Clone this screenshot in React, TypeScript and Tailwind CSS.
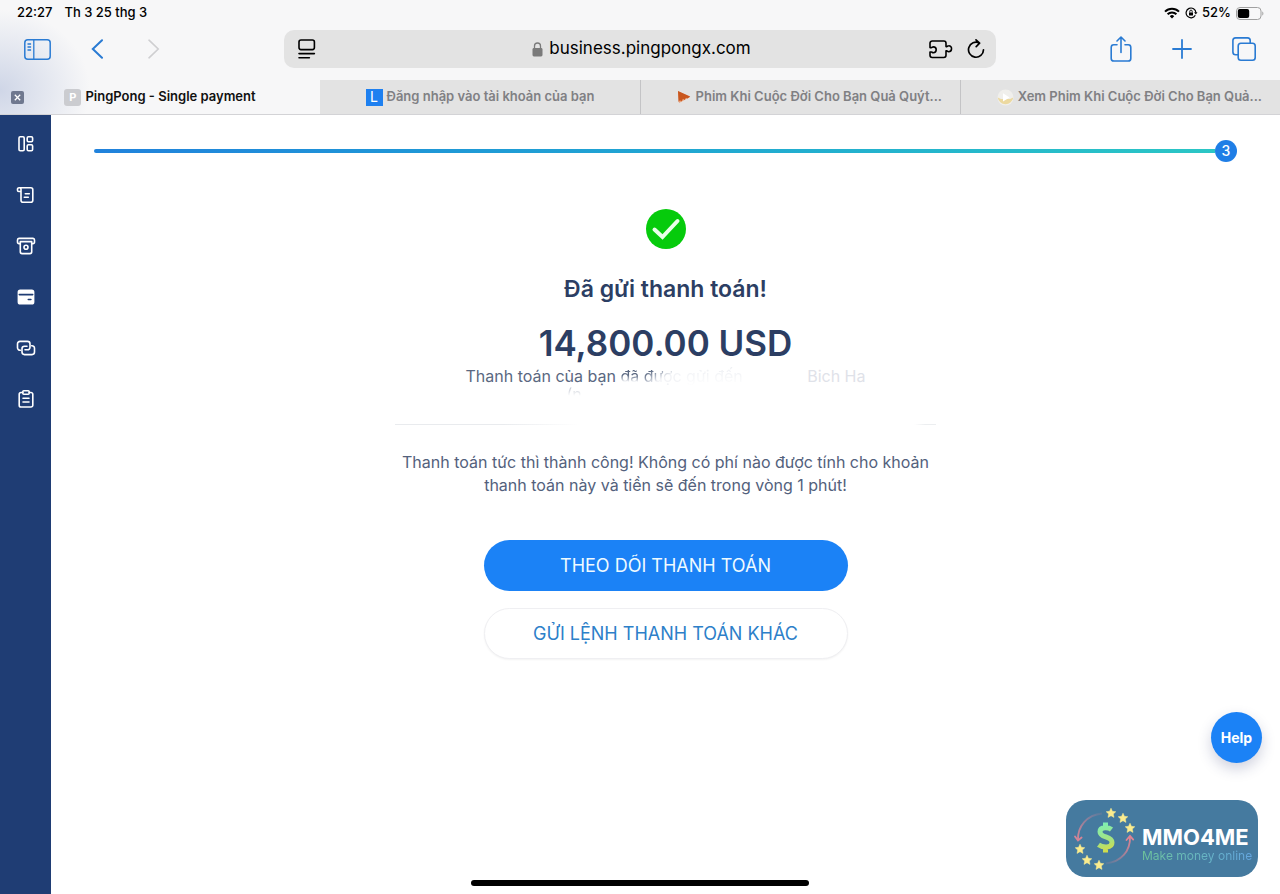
import type { ReactNode } from "react";

const STATUS_DATE = "Th 3 25 thg 3";
const INSTANT_MESSAGE =
  "Thanh toán tức thì thành công! Không có phí nào được tính cho khoản thanh toán này và tiền sẽ đến trong vòng 1 phút!";

function StatusBar() {
  return (
    <div className="flex h-[26px] items-center justify-between pr-4 pl-[17px] text-[13px] font-medium text-black">
      <div className="flex gap-3">
        <span>22:27</span>
        <span>{STATUS_DATE}</span>
      </div>
      <div className="flex items-center gap-1">
        <svg width="16" height="12" viewBox="0 0 16 12" fill="none" stroke="currentColor" strokeWidth="2">
          <path d="M1 4.6a10 10 0 0 1 14 0M3.6 7.3a6.2 6.2 0 0 1 8.8 0" />
          <path d="M5.8 9.2a3.1 3.1 0 0 1 4.4 0L8 11.5z" fill="currentColor" stroke="none" />
        </svg>
        <svg width="14" height="12" viewBox="0 0 14 12" fill="none" stroke="currentColor" strokeWidth="1.2">
          <path d="M11.3 8.3A4.9 4.9 0 1 1 11.9 5.6" />
          <path d="M10.1 5.2h3.4l-1.7 2.2z" fill="currentColor" stroke="none" />
          <rect x="5" y="5.4" width="4" height="3" rx=".5" fill="currentColor" stroke="none" />
          <path d="M5.8 5.6V4.3a1.2 1.2 0 0 1 2.4 0v1.3" strokeWidth=".9" />
        </svg>
        <span>52%</span>
        <svg width="29" height="13" viewBox="0 0 29 13" fill="none">
          <rect x="1.5" y=".5" width="24.5" height="12" rx="3.5" stroke="#a0a0a0" />
          <rect x="2.8" y="1.9" width="11.4" height="9.2" rx="2" fill="#000" />
          <path d="M27.3 4.5c1.4.4 1.4 3.6 0 4z" fill="#a0a0a0" />
        </svg>
      </div>
    </div>
  );
}

function Toolbar() {
  return (
    <div className="grid grid-cols-[2fr_5fr_2fr] items-center pt-1 pb-3 text-[#2a7bd3]">
      <div className="flex items-center gap-10 pl-6">
        <button type="button" aria-label="Sidebar">
          <svg width="27" height="21" viewBox="0 0 27 21" fill="none" stroke="currentColor" strokeWidth="1.5" className="block">
            <rect x=".8" y=".8" width="25.4" height="19.4" rx="3" />
            <path d="M9.8 1v19M3.5 5h3.6M3.5 8h3.6M3.5 11h3.6" strokeWidth="1.3" />
          </svg>
        </button>
        <button type="button" aria-label="Back">
          <svg width="16" height="20" viewBox="0 0 16 20" fill="none" stroke="currentColor" strokeWidth="2" strokeLinecap="round" className="block">
            <path d="M11 1.2 1.8 10l9.2 8.8" />
          </svg>
        </button>
        <button type="button" aria-label="Forward" className="text-[#cfcfd1]">
          <svg width="16" height="20" viewBox="0 0 16 20" fill="none" stroke="currentColor" strokeWidth="1.6" strokeLinecap="round" className="block">
            <path d="m2 1.2 9.2 8.8L2 18.8" />
          </svg>
        </button>
      </div>
      <div className="flex h-[38px] items-center justify-between rounded-[10px] bg-[#e3e3e3] pr-[11px] pl-[14px] text-black">
        <button type="button" aria-label="Page menu" className="w-14">
          <svg width="18" height="20" viewBox="0 0 18 20" fill="none" stroke="currentColor" strokeWidth="1.6" strokeLinecap="round" className="block">
            <rect x="1" y="1" width="15.4" height="9.6" rx="2" />
            <path d="M1 14.6h15.4M1 18.8h10.4" />
          </svg>
        </button>
        <label className="flex items-center gap-[6px]">
          <svg width="11" height="15" viewBox="0 0 11 15" fill="#7a7a7a">
            <rect x=".5" y="6" width="10" height="8.5" rx="1.4" />
            <path d="M2.5 6.5V4a3 3 0 0 1 6 0v2.5" fill="none" stroke="#7a7a7a" strokeWidth="1.3" />
          </svg>
          <input
            type="text"
            aria-label="Address"
            defaultValue="business.pingpongx.com"
            className="field-sizing-content bg-transparent text-[17px] outline-none"
          />
        </label>
        <div className="flex items-center gap-[14px]">
          <button type="button" aria-label="Extensions">
            <svg width="24" height="19" viewBox="0 0 24 19" fill="none" stroke="currentColor" strokeWidth="1.6" strokeLinejoin="round" className="block">
              <path d="M1 6V3.2A2.2 2.2 0 0 1 3.2 1h11.6A2.2 2.2 0 0 1 17 3.200V6.600h.8c.5 0 .6-.8 1.900-.8a2.800 2.800 0 0 1 2.800 3.400 2.800 2.800 0 0 1-2.800 2.500c-1.300 0-1.400-.8-1.900-.8H17v4.400a2.200 2.200 0 0 1-2.200 2.200H3.200A2.200 2.200 0 0 1 1 15.300V12h1.400c.6 0 .8.700 1.900.7a2.900 2.900 0 0 0 0-5.800c-1.100 0-1.300.7-1.900.7H1z" />
            </svg>
          </button>
          <button type="button" aria-label="Reload">
            <svg width="18" height="20" viewBox="0 0 18 20" fill="none" stroke="currentColor" strokeWidth="1.7" strokeLinecap="round" strokeLinejoin="round" className="block">
              <path d="M12.3 4A7.500 7.500 0 1 0 16.500 10.800M9 .9l3.600 3.300L9.200 7.600" />
            </svg>
          </button>
        </div>
      </div>
      <div className="flex items-center justify-end gap-10 pr-6">
        <button type="button" aria-label="Share">
          <svg width="22" height="26" viewBox="0 0 22 26" fill="none" stroke="currentColor" strokeWidth="1.6" strokeLinecap="round" strokeLinejoin="round" className="block">
            <path d="M7 8.800H3.800A2.600 2.600 0 0 0 1.200 11.400v11a2.600 2.600 0 0 0 2.600 2.600h14.400a2.600 2.600 0 0 0 2.600-2.600v-11a2.600 2.600 0 0 0-2.600-2.600H15M11 16.500V1.200M7 5l4-4 4 4" />
          </svg>
        </button>
        <button type="button" aria-label="New tab">
          <svg width="20" height="20" viewBox="0 0 20 20" fill="none" stroke="currentColor" strokeWidth="1.8" strokeLinecap="round" className="block">
            <path d="M10 1v18M1 10h18" />
          </svg>
        </button>
        <button type="button" aria-label="Show tabs">
          <svg width="24" height="24" viewBox="0 0 24 24" fill="none" stroke="currentColor" strokeWidth="1.6" className="block">
            <path d="M6 17.700H3.600A2.700 2.700 0 0 1 .9 15V3.600A2.700 2.700 0 0 1 3.600.9H15.500a2.700 2.700 0 0 1 2.700 2.700V6" />
            <rect x="6.2" y="6.2" width="17" height="17" rx="2.7" />
          </svg>
        </button>
      </div>
    </div>
  );
}

function TabItem({ icon, title, truncated = false }: { icon: ReactNode; title: string; truncated?: boolean }) {
  return (
    <a
      href="#"
      className={`flex items-center gap-1 border-l border-[#c4c4c6] bg-[#e3e3e3] text-[#808083] first-of-type:border-l-0 ${
        truncated ? "justify-end pr-[18px]" : "justify-center"
      }`}
    >
      {icon}
      <span className="whitespace-nowrap">{title}</span>
    </a>
  );
}

function TabBar() {
  return (
    <nav aria-label="Tabs" className="grid h-[35px] grid-cols-4 border-b border-[#d3d3d6] text-[13px] font-semibold">
      <div className="relative flex items-center justify-center gap-1 text-[#111]">
        <button
          type="button"
          aria-label="Close tab"
          className="absolute left-[11px] rounded-[2px] bg-[#6f788f] p-[3px]"
        >
          <svg width="7" height="7" viewBox="0 0 7 7" stroke="#fff" strokeWidth="1.3" className="block">
            <path d="m.8.8 5.400 5.400M6.200.8.8 6.200" />
          </svg>
        </button>
        <span className="flex size-[17px] items-center justify-center rounded-[3px] bg-[#cbccd0] text-[11px] font-bold text-white">
          P
        </span>
        <span>PingPong - Single payment</span>
      </div>
      <TabItem
        title="Đăng nhập vào tài khoản của bạn"
        icon={
          <span className="flex size-[17px] items-center justify-center bg-[#1e80f0] text-sm font-normal text-white">L</span>
        }
      />
      <TabItem
        truncated
        title="Phim Khi Cuộc Đời Cho Bạn Quả Quýt..."
        icon={
          <svg width="16" height="16" viewBox="0 0 16 16">
            <path d="M2 2.2 14 8 3 14z" fill="#e9a37c" />
            <path d="M2 2 14.2 7.600 11.500 9.500 10 8.800 8.500 11 7 9.700 5.500 12.600 4 11.300 2.500 13z" fill="#c9571f" />
          </svg>
        }
      />
      <TabItem
        truncated
        title="Xem Phim Khi Cuộc Đời Cho Bạn Quả..."
        icon={
          <svg width="17" height="17" viewBox="0 0 17 17">
            <circle cx="8.5" cy="8.5" r="8" fill="#f0efec" />
            <path d="M.7 8.500a7.900 7.900 0 0 0 15.600 0l-3.300 1.600H4z" fill="#ecd9a0" />
            <path d="M6 4.300v8.200l6.600-4.100z" fill="#fff" />
          </svg>
        }
      />
    </nav>
  );
}

const NAV_ITEMS: { label: string; icon: ReactNode }[] = [
  {
    label: "Dashboard",
    icon: (
      <>
        <rect x="3" y="2.8" width="5.2" height="14" rx="1.2" />
        <rect x="11.2" y="2.8" width="5.4" height="5" rx="1.2" />
        <rect x="11.2" y="10.8" width="5.4" height="6" rx="1.2" />
      </>
    ),
  },
  {
    label: "Transactions",
    icon: (
      <>
        <path d="M5 6.500H2.800A1.300 1.300 0 0 1 1.500 5.200V4.300a1.500 1.500 0 0 1 1.700-1.500h11.600a2 2 0 0 1 2 2v10.400a2 2 0 0 1-2 2H7a2 2 0 0 1-2-2V4.300a1.500 1.500 0 0 0-1.800-1.500" />
        <path d="M9.300 8.700h4M8.300 12.200h4" />
      </>
    ),
  },
  {
    label: "Withdraw",
    icon: (
      <>
        <path d="M4 7.600H3A1.500 1.500 0 0 1 1.500 6V4A1.600 1.600 0 0 1 3 2.400h14A1.600 1.600 0 0 1 18.500 4v2A1.500 1.500 0 0 1 17 7.600h-1" />
        <path d="M4.300 5.600h11.400v10.200a1.800 1.800 0 0 1-1.800 1.800H6.100a1.800 1.800 0 0 1-1.800-1.800z" />
        <circle cx="10" cy="11.3" r="2" />
      </>
    ),
  },
  {
    label: "Cards",
    icon: (
      <>
        <rect x="2.4" y="3.2" width="15.2" height="13.6" rx="1.8" fill="currentColor" />
        <path d="M3.300 7.600h13.400M12.300 12.500h2.600" stroke="#1f3d74" />
      </>
    ),
  },
  {
    label: "Connections",
    icon: (
      <>
        <path d="M4.300 12.300a2.500 2.500 0 0 1-2.800-2.500V5.900a2.500 2.500 0 0 1 2.500-2.500h7.500A2.500 2.500 0 0 1 14 5.900v3.400a2.500 2.500 0 0 1-2.500 2.500H9" />
        <path d="M15.700 7.700a2.500 2.500 0 0 1 2.800 2.500v3.900a2.500 2.500 0 0 1-2.500 2.500H8.500A2.500 2.500 0 0 1 6 14.100v-3.400a2.500 2.500 0 0 1 2.500-2.500H11" />
      </>
    ),
  },
  {
    label: "Reports",
    icon: (
      <>
        <path d="M6.800 3.500H5a1.800 1.800 0 0 0-1.800 1.800v10.900A1.800 1.800 0 0 0 5 18h10a1.800 1.800 0 0 0 1.800-1.800V5.300A1.800 1.800 0 0 0 15 3.500h-1.800" />
        <rect x="6.8" y="1.8" width="6.4" height="3.4" rx="1" />
        <path d="M7 9.200h6M7 13h6" />
      </>
    ),
  },
];

function Sidebar() {
  return (
    <nav aria-label="Menu" className="flex w-[51px] shrink-0 flex-col bg-[#1f3d74] pt-[3px] text-white">
      {NAV_ITEMS.map((item) => (
        <a key={item.label} href="#" aria-label={item.label} className="flex h-[51px] items-center justify-center">
          <svg width="20" height="20" viewBox="0 0 20 20" fill="none" stroke="currentColor" strokeWidth="1.6" strokeLinecap="round" strokeLinejoin="round">
            {item.icon}
          </svg>
        </a>
      ))}
    </nav>
  );
}

function PaymentResult() {
  return (
    <section className="mx-auto mt-[47px] flex w-full max-w-[541px] flex-col items-center text-center text-[#2c3e63]">
      <svg width="40" height="40" viewBox="0 0 40 40">
        <circle cx="20" cy="20" r="20" fill="#06cb0c" />
        <path d="m8.500 20.500 8 7.500L31.500 12" fill="none" stroke="#e9ffe9" strokeWidth="4" strokeLinecap="round" />
      </svg>
      <h1 className="mt-[26px] text-[23px] leading-7 font-semibold">Đã gửi thanh toán!</h1>
      <p className="mt-5 text-[35px] leading-10 font-semibold">14,800.00 USD</p>
      {/* recipient is wiped out, only parts of the sentence stay readable */}
      <div className="mt-1 flex h-9 w-[400px] flex-col text-base leading-[18px] text-[#5a6881]">
        <p className="flex justify-between whitespace-nowrap">
          <span>
            Thanh toán của bạn{" "}
            <span className="bg-linear-to-b from-[#5a6881] from-45% to-white to-80% bg-clip-text text-transparent">đã</span>{" "}
            <span className="bg-linear-to-br from-[#5a6881] from-20% to-[#f2f3f6] to-55% bg-clip-text text-transparent">được</span>{" "}
            <span className="bg-linear-to-b from-[#eceef2] to-white bg-clip-text text-transparent">gửi đến</span>
          </span>
          <span className="text-[#dfe2e9]">Bich Ha</span>
        </p>
        <p className="bg-linear-to-b from-[#b4bac6] to-white to-60% bg-clip-text pl-[101px] text-left text-transparent">
          (n
        </p>
      </div>
      <hr className="mt-[21px] h-px w-full border-0 bg-[linear-gradient(to_right,#e9ebee_20%,transparent_34%,transparent_96%,#eceef0_98%)]" />
      <p className="mt-[26px] text-base leading-[23px] text-[#53617c]">{INSTANT_MESSAGE}</p>
      <div className="mt-[43px] flex w-full max-w-[364px] flex-col gap-[17px] text-lg">
        <button type="button" className="h-[51px] rounded-full bg-[#1b82f6] text-[#eefaff]">
          THEO DÕI THANH TOÁN
        </button>
        <button type="button" className="h-[51px] rounded-full border border-[#efeff2] bg-white text-[#2d80c9] shadow-xs">
          GỬI LỆNH THANH TOÁN KHÁC
        </button>
      </div>
    </section>
  );
}

const STARS = [
  [45, 13],
  [57, 18],
  [64, 28],
  [14, 49],
  [21, 60],
  [33, 65],
];

function Watermark() {
  return (
    <aside className="absolute right-[22px] bottom-[17px] flex h-[77px] w-48 items-center rounded-[20px] bg-[#457a9f]">
      <svg width="76" height="77" viewBox="0 0 76 77" fill="none" className="shrink-0">
        <defs>
          <linearGradient id="dollar" gradientUnits="userSpaceOnUse" x1="35" y1="23" x2="44" y2="53">
            <stop offset="0" stopColor="#7df0b4" />
            <stop offset=".6" stopColor="#a7e27e" />
            <stop offset="1" stopColor="#dcdb3e" />
          </linearGradient>
          <linearGradient id="arcLeft" gradientUnits="userSpaceOnUse" x1="12" y1="40" x2="37" y2="13">
            <stop stopColor="#d58496" />
            <stop offset="1" stopColor="#d58496" stopOpacity=".1" />
          </linearGradient>
          <linearGradient id="arcRight" gradientUnits="userSpaceOnUse" x1="64" y1="38" x2="39" y2="63">
            <stop stopColor="#e08493" />
            <stop offset="1" stopColor="#e08493" stopOpacity=".1" />
          </linearGradient>
        </defs>
        <path d="M36 13.500C21 15 11.500 26 12 40" stroke="url(#arcLeft)" strokeWidth="1.8" />
        <path d="m9 36.500 3 4 3.600-3" stroke="#d58496" strokeWidth="1.8" strokeLinecap="round" />
        <path d="M40 63.500C55 62 64.500 51 64 37" stroke="url(#arcRight)" strokeWidth="1.8" />
        <path d="m60.500 40 3.500-4.200 3.200 3.800" stroke="#e08493" strokeWidth="1.8" strokeLinecap="round" />
        {STARS.map(([x, y]) => (
          <path
            key={x}
            transform={`translate(${x} ${y})`}
            d="m0-4.800 1.400 3.100 3.400.4-2.500 2.300.7 3.400L0 2.700-3 4.400l.7-3.400-2.500-2.300 3.400-.4z"
            fill="#fbec8e"
            stroke="#fbec8e"
            strokeWidth=".5"
          />
        ))}
        <path
          d="M45.500 29.500c-2.500-2-11.500-3.300-11.500 2.200 0 6.500 12 4 12 10.800 0 6-9.500 5.200-13.500 2.300M39.500 22.500v6M39.500 46.500v6"
          stroke="url(#dollar)"
          strokeWidth="5"
        />
      </svg>
      <div className="flex flex-col pt-3 whitespace-nowrap">
        <span className="text-[22px] leading-[22px] font-bold text-white">MMO4ME</span>
        <span className="bg-linear-to-r from-[#6fc59a] to-[#65a6e0] bg-clip-text text-xs leading-4 text-transparent">
          Make money online
        </span>
      </div>
    </aside>
  );
}

export default function App() {
  return (
    <div className="relative flex min-h-screen flex-col bg-white font-['Inter','Liberation_Sans',sans-serif]">
      <header className="bg-[#f7f7f8] bg-[radial-gradient(ellipse_90px_80px_at_0_90px,#cfd6e7,transparent)]">
        <StatusBar />
        <Toolbar />
        <TabBar />
      </header>
      <div className="flex flex-1">
        <Sidebar />
        <main className="flex-1 px-[43px] pt-[25px]">
          <div className="flex items-center">
            <div className="h-1 flex-1 rounded-l-full bg-linear-to-r from-[#2182dc] to-[#2bc6c5]" />
            <span className="flex size-[22px] items-center justify-center rounded-full bg-[#1f7ee6] text-sm font-medium text-white">
              3
            </span>
          </div>
          <PaymentResult />
        </main>
      </div>
      <button
        type="button"
        className="absolute right-[18px] bottom-[131px] size-[51px] rounded-full bg-[#1b82f6] text-sm font-bold text-white shadow-[0_6px_14px_rgba(40,50,110,0.22)]"
      >
        Help
      </button>
      <Watermark />
      <div className="absolute bottom-2 left-1/2 h-[6px] w-[338px] -translate-x-1/2 rounded-full bg-black" />
    </div>
  );
}
